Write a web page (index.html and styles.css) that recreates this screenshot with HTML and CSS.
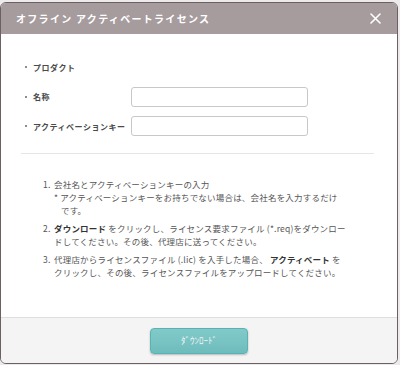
FILE: index.html
```html
<!DOCTYPE html>
<html lang="ja">
<head>
<meta charset="utf-8">
<link rel="stylesheet" href="styles.css">
</head>
<body>
<div class="dialog">
  <div class="header">
    <span class="title">オフライン アクティベートライセンス</span>
    <svg class="close" width="11" height="11" viewBox="0 0 11 11"><path d="M1 1L10 10M10 1L1 10" stroke="#fff" stroke-width="1.6" stroke-linecap="round"/></svg>
  </div>
  <div class="content">
    <div class="form">
      <div class="row"><span class="label"><i class="dot"></i>プロダクト</span></div>
      <div class="row"><span class="label"><i class="dot"></i>名称</span><input class="field" type="text"></div>
      <div class="row"><span class="label"><i class="dot"></i>アクティベーションキー</span><input class="field" type="text"></div>
    </div>
    <hr class="divider">
    <ol class="steps">
      <li><span class="num">1.</span><div class="txt">会社名とアクティベーションキーの入力<div class="note">* アクティベーションキーをお持ちでない場合は、会社名を入力するだけ<br><span class="cont">です。</span></div></div></li>
      <li><span class="num">2.</span><div class="txt"><b>ダウンロード</b> をクリックし、ライセンス要求ファイル (*.req)をダウンロー<br>ドしてください。その後、代理店に送ってください。</div></li>
      <li><span class="num">3.</span><div class="txt">代理店からライセンスファイル (.lic) を入手した場合、 <b>アクティベート</b> を<br>クリックし、その後、ライセンスファイルをアップロードしてください。</div></li>
    </ol>
  </div>
  <div class="footer">
    <button class="btn">ﾀﾞｳﾝﾛｰﾄﾞ</button>
  </div>
</div>
</body>
</html>
```
FILE: styles.css
```css
html, body { margin: 0; padding: 0; }
body {
  background: #eceaea;
  width: 400px;
  height: 365px;
  overflow: hidden;
  font-family: "Noto Sans CJK JP", "Noto Sans", sans-serif;
}
.dialog {
  margin-top: 2px;
  width: 398px;
  height: 362px;
  box-sizing: border-box;
  border: 1px solid #6c6062;
  border-radius: 6px;
  overflow: hidden;
  background: #fff;
  display: flex;
  flex-direction: column;
}
.header {
  height: 31px;
  flex: none;
  background: #a69b9d;
  display: flex;
  align-items: center;
  justify-content: space-between;
  padding: 0 16px 0 15px;
}
.title {
  color: #fff;
  font-size: 10px;
  font-weight: bold;
  letter-spacing: 1.3px;
  line-height: 1;
}
.close { display: block; }
.content {
  flex: 1;
  padding: 23px 22px 0 22px;
}
.form {
  display: flex;
  flex-direction: column;
  gap: 9.5px;
}
.row {
  display: flex;
  align-items: center;
  height: 20px;
}
.label {
  width: 108px;
  flex: none;
  display: flex;
  align-items: center;
  font-size: 8px;
  font-weight: bold;
  color: #4a4a4a;
  letter-spacing: 0.5px;
  white-space: nowrap;
}
.dot {
  width: 2px;
  height: 2px;
  background: #666;
  border-radius: 50%;
  margin: 0 6px 0 2px;
}
.field {
  width: 177px;
  height: 20px;
  box-sizing: border-box;
  border: 1px solid #c8c8c8;
  border-radius: 3px;
  background: #fff;
  margin: 0;
  padding: 0 4px;
}
.divider {
  border: none;
  border-top: 1px solid #e6e6e6;
  margin: 17px 1px 0 -2px;
}
.steps {
  list-style: none;
  margin: 24px 0 0 0;
  padding: 0 0 0 20px;
  color: #555;
  font-size: 8.5px;
  line-height: 13px;
  letter-spacing: 0.2px;
}
.steps li {
  display: flex;
  margin-bottom: 5px;
}
.num {
  width: 11px;
  flex: none;
}
.txt { white-space: nowrap; }
.txt b { font-weight: bold; color: #333; }
.cont { padding-left: 7px; }
.footer {
  height: 45px;
  flex: none;
  background: #f4f4f4;
  border-top: 1px solid #dedede;
  display: flex;
  justify-content: center;
  align-items: center;
}
.btn {
  width: 98px;
  height: 26px;
  border: 1px solid #58b3b3;
  border-radius: 4px;
  background: linear-gradient(#82caca, #6fbcbc);
  box-shadow: 0 1px 2px rgba(0,0,0,0.25);
  color: #f4f4f4;
  font-family: "Noto Sans CJK JP", sans-serif;
  font-size: 9px;
  font-weight: normal;
  padding: 0;
  margin: 0;
}
```
